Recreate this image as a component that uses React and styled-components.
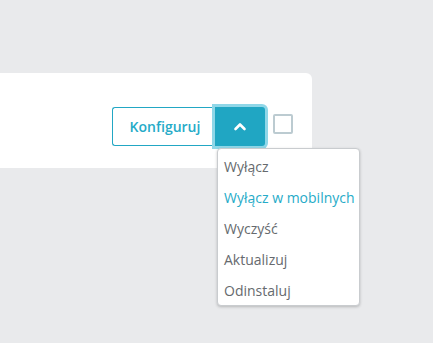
import React from 'react'
import styled, { createGlobalStyle } from 'styled-components'

const Global = createGlobalStyle`
  html, body {
    margin: 0;
    background: #e9eaec;
    font-family: "Open Sans", "Noto Sans", sans-serif;
  }
`

const Page = styled.div`
  padding-top: 73px;
  height: 343px;
  box-sizing: border-box;
  overflow: hidden;
`

const Card = styled.div`
  margin-left: -8px;
  width: 320px;
  height: 95px;
  box-sizing: border-box;
  background: #fff;
  border-radius: 6px;
  padding: 34px 19px 0 0;
  display: flex;
  justify-content: flex-end;
  align-items: flex-start;
`

const Group = styled.div`
  position: relative;
  display: flex;
`

const MainButton = styled.button`
  width: 103px;
  height: 39px;
  box-sizing: border-box;
  border: 1px solid #22a7c4;
  border-right: none;
  border-radius: 3px 0 0 3px;
  background: #fff;
  color: #26abc8;
  font-family: inherit;
  font-size: 14px;
  font-weight: 600;
  padding: 0 0 1px 2px;
  cursor: pointer;
`

const ToggleButton = styled.button`
  width: 50px;
  height: 39px;
  box-sizing: border-box;
  border: none;
  border-radius: 0 3px 3px 0;
  background: #20a6c3;
  box-shadow: 0 0 0 3px #8fd7e8;
  display: flex;
  align-items: center;
  justify-content: center;
  padding: 0;
  cursor: pointer;
`

const Check = styled.span`
  width: 20px;
  height: 20px;
  box-sizing: border-box;
  border: 2px solid #bccbd1;
  border-radius: 2px;
  margin: 7px 0 0 8px;
  background: #fff;
`

const Menu = styled.ul`
  position: absolute;
  top: 41px;
  left: 105px;
  width: 143px;
  margin: 0;
  padding: 2px 0 0;
  list-style: none;
  background: #fff;
  border: 1px solid #c9cccf;
  border-radius: 4px;
  box-shadow: 0 1px 3px rgba(0, 0, 0, 0.22);
  box-sizing: border-box;
  height: 158px;
`

const Item = styled.li`
  height: 31px;
  line-height: 31px;
  padding-left: 6px;
  font-size: 14px;
  white-space: nowrap;
  color: ${p => (p.$active ? '#26abc8' : '#666a6e')};
`

const items = ['Wyłącz', 'Wyłącz w mobilnych', 'Wyczyść', 'Aktualizuj', 'Odinstaluj']

export default function App() {
  return (
    <Page>
      <Global />
      <Card>
        <Group>
          <MainButton>Konfiguruj</MainButton>
          <ToggleButton>
            <svg width="14" height="9" viewBox="0 0 14 9">
              <path d="M2.5 7 L7 2.5 L11.5 7" fill="none" stroke="#fff" strokeWidth="2.6" strokeLinecap="round" strokeLinejoin="round" />
            </svg>
          </ToggleButton>
          <Menu>
            {items.map((t, i) => (
              <Item key={t} $active={i === 1}>{t}</Item>
            ))}
          </Menu>
        </Group>
        <Check />
      </Card>
    </Page>
  )
}
